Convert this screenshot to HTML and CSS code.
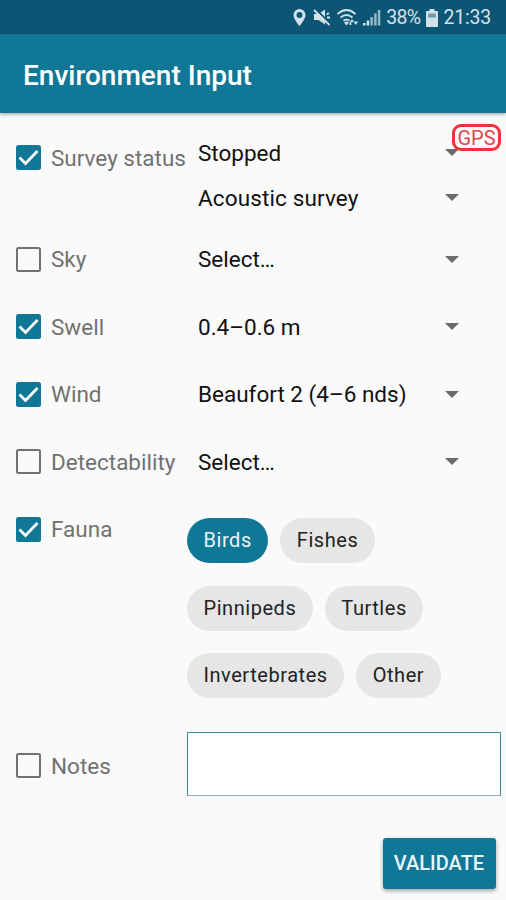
FILE: index.html
```
<!DOCTYPE html>
<html lang="en">
<head>
<meta charset="utf-8">
<title>Environment Input</title>
<link rel="stylesheet" href="styles.css">
</head>
<body>
<div class="status">
  <svg class="status-icons" width="90" height="20" viewBox="0 0 90 20">
    <path fill-rule="evenodd" d="M7.500 1a6 6 0 0 0-6 6c0 4.300 6 11 6 11s6-6.700 6-11a6 6 0 0 0-6-6zm0 3a3 3 0 1 1 0 6a3 3 0 0 1 0-6z"/>
    <path d="M22 6h4.500L33 1.500v15L26.500 12H22z"/>
    <path class="cut" d="M23 .5l15 15"/>
    <path class="line" d="M22 2l15.500 15M34.500 6.500l2.500-1.500M35 9.500h3"/>
    <path class="line" d="M45.500 6q9-8 18 0M48.500 9.500q6-5 12 0M51.500 12.800q3-2.400 6 0"/>
    <path d="M52 14.500l2.500 3 2.500-3-2.500-1zM58 14l2-3 2 3zM61.500 13.500l2.300 3.500 2.300-3.500zM57.500 14h1.800v3h-1.800z"/>
    <path d="M71 15h2.500v2.500H71zM74.700 12.500h2.500v5h-2.500z"/>
    <path class="dim" d="M78.400 9h2.500v8.500h-2.500zM82.100 5.500h2.500v12h-2.500zM85.800 2h2.500v15.500h-2.500z"/>
  </svg>
  <span class="battery-text">38%</span>
  <svg class="battery" width="12" height="18" viewBox="0 0 12 18">
    <path d="M3.500 0h5v2H11q1 0 1 1v14q0 1-1 1H1q-1 0-1-1V3q0-1 1-1h2.500z"/>
    <path class="empty" d="M2 4.500h8v4H2z"/>
  </svg>
  <span class="clock">21:33</span>
</div>
<header class="bar"><h1>Environment Input</h1></header>
<main class="form">
  <span class="gps">GPS</span>
  <div class="row row-status">
    <label class="check"><span class="box on"><svg viewBox="0 0 25 25"><path d="M3.500 12.500l6 6L21.500 6"/></svg></span><span>Survey status</span></label>
    <div class="selects">
      <div class="select"><span>Stopped</span><i></i></div>
      <div class="select"><span class="wide">Acoustic survey</span><i></i></div>
    </div>
  </div>
  <div class="row">
    <label class="check"><span class="box"></span><span>Sky</span></label>
    <div class="select"><span>Select…</span><i></i></div>
  </div>
  <div class="row">
    <label class="check"><span class="box on"><svg viewBox="0 0 25 25"><path d="M3.500 12.500l6 6L21.500 6"/></svg></span><span>Swell</span></label>
    <div class="select"><span>0.4–0.6 m</span><i></i></div>
  </div>
  <div class="row">
    <label class="check"><span class="box on"><svg viewBox="0 0 25 25"><path d="M3.500 12.500l6 6L21.500 6"/></svg></span><span>Wind</span></label>
    <div class="select"><span>Beaufort 2 (4–6 nds)</span><i></i></div>
  </div>
  <div class="row">
    <label class="check"><span class="box"></span><span>Detectability</span></label>
    <div class="select"><span>Select…</span><i></i></div>
  </div>
  <div class="row row-fauna">
    <label class="check"><span class="box on"><svg viewBox="0 0 25 25"><path d="M3.500 12.500l6 6L21.500 6"/></svg></span><span>Fauna</span></label>
    <div class="chips">
      <div class="chip-line"><span class="chip active">Birds</span><span class="chip">Fishes</span></div>
      <div class="chip-line"><span class="chip">Pinnipeds</span><span class="chip">Turtles</span></div>
      <div class="chip-line"><span class="chip">Invertebrates</span><span class="chip">Other</span></div>
    </div>
  </div>
  <div class="row row-notes">
    <label class="check"><span class="box"></span><span>Notes</span></label>
    <div class="notes"></div>
  </div>
  <div class="actions"><button class="validate">VALIDATE</button></div>
</main>
</body>
</html>
```
FILE: styles.css
```
* { box-sizing: border-box; }
body {
  margin: 0;
  width: 506px;
  height: 900px;
  overflow: hidden;
  background: #fafafa;
  font-family: Roboto, "Liberation Sans", sans-serif;
  display: flex;
  flex-direction: column;
}
.status {
  height: 34px;
  flex: none;
  background: #0c5575;
  color: #d3e1e8;
  display: flex;
  align-items: center;
  justify-content: flex-end;
  padding: 2px 15px 0 0;
  font-size: 19.5px;
  line-height: 32px;
}
.status svg { fill: #d3e1e8; }
.status-icons { margin-right: 4px; }
.status-icons .line { fill: none; stroke: #d3e1e8; stroke-width: 1.8; }
.status-icons .cut { fill: none; stroke: #0c5575; stroke-width: 2; }
.status-icons .dim { opacity: .7; }
.status .empty { fill: #6e9bb0; }
.battery-text { letter-spacing: -.7px; }
.battery { margin: 0 5px 0 6px; }
.clock { letter-spacing: -.2px; }
.bar {
  height: 79px;
  flex: none;
  background: #107896;
  box-shadow: 0 1px 4px rgba(0, 0, 0, .4);
  display: flex;
  align-items: center;
  padding: 4px 0 0 23px;
  z-index: 1;
}
h1 { margin: 0; color: #fff; font-size: 28px; line-height: 34px; font-weight: 500; }
.form { position: relative; flex: 1; }
.gps {
  position: absolute;
  left: 452px;
  top: 11px;
  width: 49px;
  height: 27px;
  border: 3.500px solid #f5313a;
  border-radius: 9px;
  color: #e04850;
  background: #fafafa;
  font-size: 20px;
  line-height: 22px;
  text-align: center;
}
.row { display: flex; height: 67.5px; }
.row-status { height: 112.500px; }
.check {
  width: 187px;
  height: 67px;
  flex: none;
  display: flex;
  align-items: center;
  gap: 10px;
  padding-left: 16px;
  color: #717171;
  font-size: 22.5px;
  white-space: nowrap;
}
.row-status .check { height: 89px; }
.box {
  width: 25px;
  height: 25px;
  flex: none;
  border: 2px solid #717171;
  border-radius: 2.500px;
}
.box.on { border: 0; background: #107896; }
.box svg { display: block; width: 25px; height: 25px; fill: none; stroke: #fff; stroke-width: 2.800; }
.selects { flex: 1; padding-top: 17px; }
.select {
  flex: 1;
  height: 67px;
  display: flex;
  align-items: center;
  justify-content: space-between;
  padding: 0 47px 0 11px;
  color: #111;
  font-size: 22.5px;
}
.selects .select { height: 45px; }
.wide { letter-spacing: .13px; }
.select i { border: 7px solid transparent; border-top-color: #6b6b6b; border-bottom: 0; }
.row-fauna { height: 214px; }
.chips { padding-top: 22.500px; display: flex; flex-direction: column; gap: 22.500px; }
.chip-line { display: flex; gap: 12px; }
.chip {
  height: 45px;
  line-height: 45px;
  padding: 0 16.500px;
  border-radius: 23px;
  background: #e6e6e6;
  color: #222;
  font-size: 20px;
  letter-spacing: .55px;
}
.chip.active { background: #107896; color: #e9f5f8; }
.row-notes { align-items: center; height: 112px; }
.notes {
  width: 314px;
  height: 64px;
  margin-top: -3px;
  border: 1px solid #3f8794;
  border-bottom-color: #86b2ba;
  background: #fff;
}
.actions { display: flex; justify-content: flex-end; padding: 16px 10.500px 0 0; }
.validate {
  width: 113px;
  height: 51px;
  padding: 0;
  border: 0;
  border-radius: 3px;
  background: #107896;
  box-shadow: 0 2px 4px rgba(0, 0, 0, .35);
  color: #e9f5f8;
  font: 500 20px/51px Roboto, "Liberation Sans", sans-serif;
}
```
